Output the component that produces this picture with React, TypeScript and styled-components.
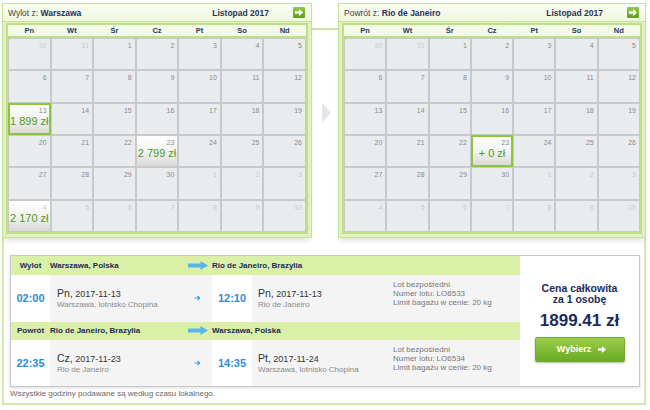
import React from "react";
import styled, { createGlobalStyle } from "styled-components";

type DayCell = {
  day: number;
  muted?: boolean;
  price?: string;
  selected?: boolean;
};

type Stop = {
  time: string;
  weekday: string;
  date: string;
  place: string;
};

type Leg = {
  label: string;
  from: string;
  to: string;
  dep: Stop;
  arr: Stop;
  flightNo: string;
};

const WEEKDAYS = ["Pn", "Wt", "Śr", "Cz", "Pt", "So", "Nd"];

// listopad 2017 zaczyna się w środę: 30, 31 z października, potem 1-30 i 1-10 grudnia
const buildMonth = (
  prices: Record<string, { price: string; selected?: boolean }>
): DayCell[] => {
  const cells: DayCell[] = [];
  [30, 31].forEach((d) => cells.push({ day: d, muted: true, ...prices[`10-${d}`] }));
  for (let d = 1; d <= 30; d++) cells.push({ day: d, ...prices[`11-${d}`] });
  for (let d = 1; d <= 10; d++)
    cells.push({ day: d, muted: true, ...prices[`12-${d}`] });
  return cells;
};

const outbound = buildMonth({
  "11-13": { price: "1 899 zł", selected: true },
  "11-23": { price: "2 799 zł" },
  "12-4": { price: "2 170 zł" },
});

const inbound = buildMonth({
  "11-23": { price: "+ 0 zł", selected: true },
});

const legs: Leg[] = [
  {
    label: "Wylot",
    from: "Warszawa, Polska",
    to: "Rio de Janeiro, Brazylia",
    dep: { time: "02:00", weekday: "Pn", date: "2017-11-13", place: "Warszawa, lotnisko Chopina" },
    arr: { time: "12:10", weekday: "Pn", date: "2017-11-13", place: "Rio de Janeiro" },
    flightNo: "LO6533",
  },
  {
    label: "Powrót",
    from: "Rio de Janeiro, Brazylia",
    to: "Warszawa, Polska",
    dep: { time: "22:35", weekday: "Cz", date: "2017-11-23", place: "Rio de Janeiro" },
    arr: { time: "14:35", weekday: "Pt", date: "2017-11-24", place: "Warszawa, lotnisko Chopina" },
    flightNo: "LO6534",
  },
];

const NextIcon = () => (
  <svg width="8" height="7" viewBox="0 0 8 7">
    <path d="M0 2.2h4V0l4 3.5L4 7V4.8H0z" fill="#fff" />
  </svg>
);

const BigArrow = () => (
  <svg width="20" height="9" viewBox="0 0 20 9">
    <path d="M0 2.4h12.5V0L20 4.5 12.5 9V6.6H0z" fill="#5ab6ea" />
  </svg>
);

const SmallArrow = () => (
  <svg width="7" height="6" viewBox="0 0 7 6">
    <path d="M0.5 3h5M3.6 1l2 2-2 2" stroke="#3aa0e0" strokeWidth="1.2" fill="none" />
  </svg>
);

function Calendar({
  title,
  city,
  cells,
  width,
}: {
  title: string;
  city: string;
  cells: DayCell[];
  width: number;
}) {
  return (
    <CalBox $width={width}>
      <CalHeader>
        <span>
          {title} <strong>{city}</strong>
        </span>
        <MonthName>Listopad 2017</MonthName>
        <NextButton>
          <NextIcon />
        </NextButton>
      </CalHeader>
      <GridWrap>
        <DayNames>
          {WEEKDAYS.map((d) => (
            <span key={d}>{d}</span>
          ))}
        </DayNames>
        <Days>
          {cells.map((c, i) => (
            <Day key={i} $priced={!!c.price} $selected={!!c.selected}>
              <DayNumber $muted={!!c.muted}>{c.day}</DayNumber>
              {c.price && <Price>{c.price}</Price>}
            </Day>
          ))}
        </Days>
      </GridWrap>
    </CalBox>
  );
}

function StopInfo({ stop }: { stop: Stop }) {
  return (
    <div>
      <DateLine>
        <big>{stop.weekday},</big> {stop.date}
      </DateLine>
      <Place>{stop.place}</Place>
    </div>
  );
}

function App() {
  return (
    <>
      <GlobalStyle />
      <Page>
        <CalendarRow>
          <Calendar title="Wylot z:" city="Warszawa" cells={outbound} width={310} />
          <Link>
            <Chevron />
          </Link>
          <Calendar title="Powrót z:" city="Rio de Janeiro" cells={inbound} width={308} />
        </CalendarRow>

        <Frame>
          <Summary>
            <Flights>
              {legs.map((leg) => (
                <React.Fragment key={leg.label}>
                  <RouteHeader>
                    <LegLabel>{leg.label}</LegLabel>
                    <FromCity>
                      {leg.from}
                      <BigArrow />
                    </FromCity>
                    <ToCity>{leg.to}</ToCity>
                  </RouteHeader>
                  <RouteBody $tall={leg.label === "Wylot"}>
                    <Time>{leg.dep.time}</Time>
                    <StopCell>
                      <StopInfo stop={leg.dep} />
                      <SmallArrow />
                    </StopCell>
                    <Time>{leg.arr.time}</Time>
                    <ArrivalCell>
                      <StopInfo stop={leg.arr} />
                      <Details>
                        Lot bezpośredni
                        <br />
                        Numer lotu: {leg.flightNo}
                        <br />
                        Limit bagażu w cenie: 20 kg
                      </Details>
                    </ArrivalCell>
                  </RouteBody>
                </React.Fragment>
              ))}
            </Flights>
            <PricePanel>
              <PriceTitle>
                Cena całkowita
                <br />
                za 1 osobę
              </PriceTitle>
              <Total>1899.41 zł</Total>
              <SelectButton>
                Wybierz
                <NextIcon />
              </SelectButton>
            </PricePanel>
          </Summary>
          <Footnote>Wszystkie godziny podawane są według czasu lokalnego.</Footnote>
        </Frame>
      </Page>
    </>
  );
}

export default App;

const GlobalStyle = createGlobalStyle`
  html, body {
    margin: 0;
    padding: 0;
    background: #fff;
  }
  body {
    font-family: "Liberation Sans", Arial, sans-serif;
    color: #333;
  }
`;

const Page = styled.div`
  width: 644px;
  padding: 3px 0 0 2px;
`;

const CalendarRow = styled.div`
  display: flex;
  align-items: flex-start;
`;

const CalBox = styled.div<{ $width: number }>`
  width: ${(p) => p.$width}px;
  box-sizing: border-box;
  border: 1px solid #c6e199;
  background: #e1f1c3;
  box-shadow: 0 4px 6px -2px rgba(0, 0, 0, 0.14);
`;

const CalHeader = styled.div`
  height: 17px;
  display: flex;
  align-items: center;
  padding: 0 6px 0 5px;
  background: linear-gradient(#fafdf4, #eff8e0);
  border-bottom: 1px solid #c6e199;
  font-size: 8.5px;
  color: #444;

  strong {
    color: #1d2f63;
  }
`;

const MonthName = styled.span`
  margin-left: auto;
  margin-right: 24px;
  font-weight: bold;
  color: #2a3552;
`;

const NextButton = styled.span`
  width: 12px;
  height: 11px;
  border-radius: 1px;
  background: linear-gradient(#93c94a, #5f9e22);
  display: flex;
  align-items: center;
  justify-content: center;
`;

const GridWrap = styled.div`
  margin: 1px 3px 3px;
  border: 2px solid #bfdf88;
  background: #fff;
`;

const DayNames = styled.div`
  display: grid;
  grid-template-columns: repeat(7, 1fr);
  height: 11px;
  line-height: 11px;
  background: #f3fae5;
  border-bottom: 2px solid #bfdf88;
  font-size: 7.5px;
  font-weight: bold;
  color: #26396a;
  text-align: center;
`;

const Days = styled.div`
  display: grid;
  grid-template-columns: repeat(7, 1fr);
  grid-template-rows: repeat(6, 1fr);
  height: 194px;
`;

const Day = styled.div<{ $priced: boolean; $selected: boolean }>`
  box-sizing: border-box;
  border: 1px solid ${(p) => (p.$selected ? "#8cc63f" : "#c9c9c9")};
  box-shadow: ${(p) => (p.$selected ? "inset 0 0 0 1px #8cc63f" : "none")};
  background: ${(p) =>
    p.$priced ? "linear-gradient(#ffffff 0%, #f4f4f4 45%, #d9d9d9 100%)" : "#e9ecef"};
  display: flex;
  flex-direction: column;
`;

const DayNumber = styled.div<{ $muted: boolean }>`
  padding: 3px 3px 0 0;
  text-align: right;
  font-size: 7px;
  line-height: 8px;
  color: ${(p) => (p.$muted ? "#c9c9c9" : "#8a8a8a")};
`;

const Price = styled.div`
  text-align: center;
  font-size: 11px;
  line-height: 12px;
  color: #4f9a1d;
  white-space: nowrap;
`;

const Link = styled.div`
  flex: 1;
  margin-top: 25px;
  border-top: 2px solid #cfe7a8;
  display: flex;
  justify-content: center;
`;

const Chevron = styled.div`
  width: 0;
  height: 0;
  margin: 73px 0 0 3px;
  border-left: 9px solid #e2e6ea;
  border-top: 10px solid transparent;
  border-bottom: 10px solid transparent;
`;

const Frame = styled.div`
  border: 2px solid #d3eaae;
  border-top: 0;
  padding: 17px 4px 4px 6px;
`;

const Summary = styled.div`
  display: flex;
  height: 132px;
  box-sizing: border-box;
  border: 1px solid #c8c8c8;
  background: #fff;
  box-shadow: 0 1px 3px rgba(0, 0, 0, 0.15);
`;

const Flights = styled.div`
  width: 509px;
  display: flex;
  flex-direction: column;
`;

const Columns = styled.div`
  display: grid;
  grid-template-columns: 39px 162px 40px 1fr;
`;

const RouteHeader = styled(Columns)`
  height: 19px;
  background: #dbf0a7;
  align-items: center;
  font-size: 8px;
  font-weight: bold;
  color: #1c2a55;

  & + & {
    height: 18px;
  }
`;

const LegLabel = styled.span`
  text-align: center;
`;

const FromCity = styled.span`
  display: flex;
  align-items: center;
  justify-content: space-between;
  padding-right: 4px;
`;

const ToCity = styled.span`
  grid-column: 3 / 5;
`;

const RouteBody = styled(Columns)<{ $tall: boolean }>`
  height: ${(p) => (p.$tall ? 47 : 46)}px;
`;

const Time = styled.div`
  display: flex;
  align-items: center;
  justify-content: center;
  font-size: 11px;
  font-weight: bold;
  color: #2a8ed6;
`;

const StopCell = styled.div`
  background: #f4f4f4;
  display: flex;
  align-items: center;
  justify-content: space-between;
  padding: 0 11px 0 7px;
`;

const ArrivalCell = styled.div`
  background: #f4f4f4;
  display: grid;
  grid-template-columns: 135px 1fr;
  align-items: center;
  padding-left: 6px;
`;

const DateLine = styled.div`
  font-size: 9px;
  line-height: 12px;
  color: #333;

  big {
    font-size: 10.5px;
  }
`;

const Place = styled.div`
  font-size: 8px;
  line-height: 9px;
  color: #8a8a8a;
`;

const Details = styled.div`
  font-size: 8px;
  line-height: 9.3px;
  color: #777;
  margin-bottom: 9px;
`;

const PricePanel = styled.div`
  flex: 1;
  display: flex;
  flex-direction: column;
  align-items: center;
  justify-content: center;
  padding-top: 2px;
  color: #1c2b5e;
`;

const PriceTitle = styled.div`
  font-size: 10.5px;
  line-height: 11px;
  font-weight: bold;
  text-align: center;
`;

const Total = styled.div`
  margin: 6px 0 7px;
  font-size: 17px;
  line-height: 19px;
  font-weight: bold;
`;

const SelectButton = styled.button`
  width: 90px;
  height: 25px;
  border: 1px solid #72a92e;
  border-radius: 2px;
  background: linear-gradient(#9bcd4d, #6aab22);
  box-shadow: 0 1px 2px rgba(0, 0, 0, 0.3);
  color: #fff;
  font-family: inherit;
  font-size: 9px;
  font-weight: bold;
  display: flex;
  align-items: center;
  justify-content: center;
  gap: 7px;
  padding: 0 0 0 4px;
`;

const Footnote = styled.div`
  margin-top: 2px;
  font-size: 8px;
  line-height: 10px;
  color: #666;
`;
